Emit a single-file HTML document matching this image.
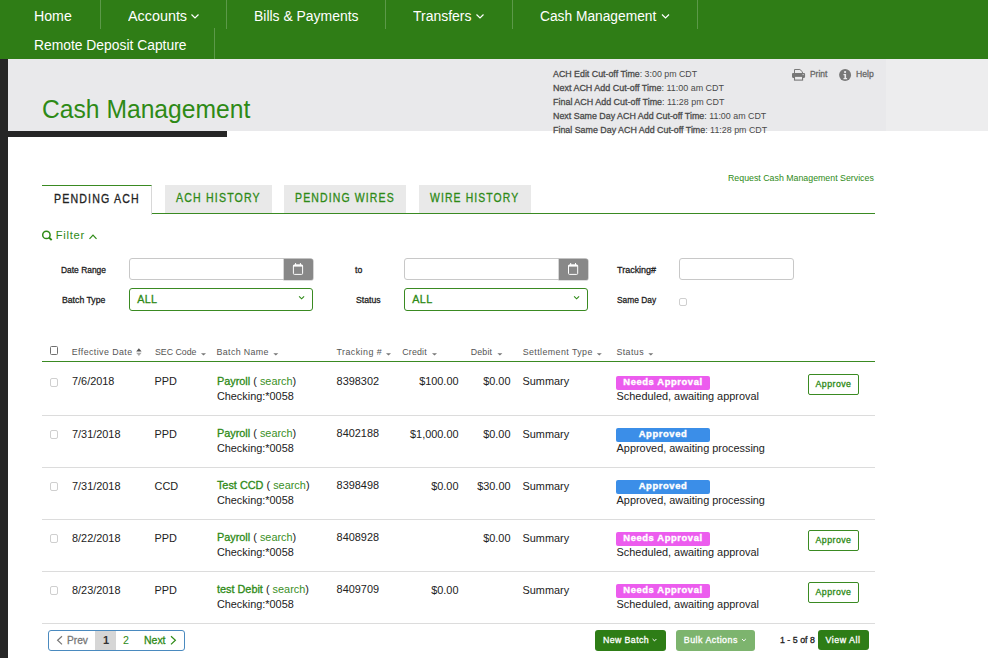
<!DOCTYPE html>
<html><head><meta charset="utf-8">
<style>
*{box-sizing:border-box;margin:0;padding:0}
html,body{width:988px;height:658px;overflow:hidden;background:#fff;font-family:"Liberation Sans",sans-serif;position:relative}
.t{position:absolute;white-space:nowrap}
.t b{font-weight:normal;-webkit-text-stroke:0.3px currentColor}
.bx{position:absolute}
.sep{position:absolute;width:1px;background:rgba(255,255,255,0.22)}
.cb{position:absolute;width:8.5px;height:9px;border:1px solid #cfcfcf;border-radius:2px;background:#fff}
.rsep{position:absolute;left:42px;width:833px;height:1px;background:#dcdcdc}
.badge{position:absolute;left:616px;width:94px;height:13.5px;border-radius:2px;color:#fff;font-weight:bold;font-size:9.4px;line-height:11.5px;-webkit-text-stroke:0.4px #fff;text-align:center;letter-spacing:0.6px;padding-top:0px;white-space:nowrap}
.appr{position:absolute;left:808px;width:51px;height:20.6px;border:1px solid #3a8a22;border-radius:2px;color:#2e8a16;font-weight:normal;-webkit-text-stroke:0.3px #2e8a16;font-size:8.8px;line-height:18.6px;text-align:center;white-space:nowrap;letter-spacing:0.45px}
.inp{position:absolute;border:1px solid #c8c8c8;border-radius:3px;background:#fff}
.cal{position:absolute;background:#888;border-radius:0 2px 2px 0;box-shadow:0 0 0 0.6px #bbb}
.sel{position:absolute;border:1.4px solid #3a8a22;border-radius:3px;background:#fff}
.tab{position:absolute;top:185px;height:28px;background:#e9e9e9}
svg{position:absolute;overflow:visible}
</style></head><body>
<div class="bx" style="left:0;top:0;width:988px;height:59px;background:#2f7d16"></div>
<div class="sep" style="left:100px;top:0;height:29px"></div>
<div class="sep" style="left:226px;top:0;height:29px"></div>
<div class="sep" style="left:385px;top:0;height:29px"></div>
<div class="sep" style="left:512px;top:0;height:29px"></div>
<div class="sep" style="left:697px;top:0;height:29px"></div>
<div class="sep" style="left:214px;top:28px;height:30.5px"></div>
<svg style="left:0;top:0" width="988" height="59"><g fill="none" stroke="#fff" stroke-width="1.2">
<polyline points="191.5,14.5 195,18 198.5,14.5"/>
<polyline points="476.5,14.5 480,18 483.5,14.5"/>
<polyline points="662,14.5 665.5,18 669,14.5"/>
</g></svg>
<div class="bx" style="left:0;top:59px;width:8px;height:600px;background:#262626"></div>
<div class="bx" style="left:8px;top:59px;width:878px;height:71.5px;background:#e9e9eb"></div>
<div class="bx" style="left:886px;top:59px;width:102px;height:71.5px;background:#ededee"></div>
<div class="bx" style="left:8px;top:131px;width:219px;height:6px;background:#262626"></div>
<!-- print icon -->
<svg style="left:791.9px;top:69px" width="13.1" height="11.6" viewBox="0 0 13.1 11.6">
<path d="M2.5 4.2V0.5H7.9L10.4 2.8V4.2" fill="#e9e9eb" stroke="#777" stroke-width="1"/>
<rect x="0" y="3.9" width="13.1" height="5" rx="1.1" fill="#777"/>
<circle cx="11.1" cy="5.6" r="0.6" fill="#e9e9eb"/>
<rect x="2.5" y="7.3" width="8.1" height="3.8" fill="#e9e9eb" stroke="#777" stroke-width="1.1"/>
</svg>
<!-- help icon -->
<svg style="left:839.3px;top:68.9px" width="12.2" height="12" viewBox="0 0 12 12">
<circle cx="6" cy="6" r="6" fill="#777"/>
<circle cx="6" cy="3.1" r="1.1" fill="#e9e9eb"/>
<path fill="#e9e9eb" d="M4.4 5h2.6v4h1v1.2h-3.6v-1.2h1v-2.8h-1z"/>
</svg>
<!-- tabs -->
<div class="bx" style="left:42px;top:185px;width:110px;height:29.5px;background:#fff;border-top:1px solid #3a8a22;border-right:1px solid #d8d8d8"></div>
<div class="tab" style="left:165px;width:107px"></div>
<div class="tab" style="left:284px;width:122px"></div>
<div class="tab" style="left:419px;width:112px"></div>
<div class="bx" style="left:152px;top:213px;width:723px;height:1px;background:#3a8a22"></div>
<!-- filter icons -->
<svg style="left:0;top:0" width="988" height="658"><g fill="none" stroke="#2e8a16">
<circle cx="46.4" cy="234.9" r="3.7" stroke-width="1.5"/>
<line x1="49" y1="237.5" x2="51.7" y2="240.2" stroke-width="1.9"/>
<polyline points="89.5,238.8 93,235.2 96.5,238.8" stroke-width="1.2"/>
</g></svg>
<!-- form -->
<div class="inp" style="left:129.3px;top:258.4px;width:183.6px;height:22px"></div>
<div class="cal" style="left:283.6px;top:258.6px;width:29.3px;height:21.6px"></div>
<div class="inp" style="left:404.4px;top:258.4px;width:183.5px;height:22px"></div>
<div class="cal" style="left:558.6px;top:258.6px;width:29.3px;height:21.6px"></div>
<svg style="left:0;top:0" width="988" height="658"><g fill="none" stroke="#fff" stroke-width="1">
<rect x="293.4" y="264.8" width="9.2" height="9.6" rx="1"/>
<rect x="293.4" y="265" width="9.2" height="1.6" fill="#fff" stroke="none"/>
<line x1="295.6" y1="263" x2="295.6" y2="265.5"/>
<line x1="300.4" y1="263" x2="300.4" y2="265.5"/>
<rect x="568.5" y="264.8" width="9.2" height="9.6" rx="1"/>
<rect x="568.5" y="265" width="9.2" height="1.6" fill="#fff" stroke="none"/>
<line x1="570.7" y1="263" x2="570.7" y2="265.5"/>
<line x1="575.5" y1="263" x2="575.5" y2="265.5"/>
</g></svg>
<div class="sel" style="left:129.3px;top:288.4px;width:183.6px;height:22.2px"></div>
<div class="sel" style="left:404.4px;top:288.4px;width:183.5px;height:22.2px"></div>
<svg style="left:0;top:0" width="988" height="658"><g fill="none" stroke="#2e8a16" stroke-width="1.1">
<polyline points="299.1,296.3 301.6,298.8 304.1,296.3"/>
<polyline points="574.1,296.3 576.6,298.8 579.1,296.3"/>
</g></svg>
<div class="inp" style="left:679.2px;top:258.3px;width:114.6px;height:22.2px"></div>
<div class="cb" style="left:679px;top:298px;width:8px;height:8px"></div>
<!-- table header -->
<div class="bx" style="left:50.3px;top:346.3px;width:7.6px;height:8.5px;border:1px solid #707070;border-radius:1.5px"></div>
<svg style="left:0;top:0" width="988" height="658"><g fill="#777">
<path d="M136.2 351.5l2.7-3.3 2.7 3.3z" fill="#555"/>
<path d="M136.2 352.8l2.7 3.3 2.7-3.3z" fill="#aaa"/>
<path d="M201 353.2h5l-2.5 2.3z"/>
<path d="M273.3 353.2h5l-2.5 2.3z"/>
<path d="M386 353.2h5l-2.5 2.3z"/>
<path d="M432 353.2h5l-2.5 2.3z"/>
<path d="M497.4 353.2h5l-2.5 2.3z"/>
<path d="M596.8 353.2h5l-2.5 2.3z"/>
<path d="M648.3 353.2h5l-2.5 2.3z"/>
</g></svg>
<div class="bx" style="left:42px;top:360.5px;width:833px;height:1.3px;background:#3a8a22"></div>
<!-- pagination -->
<div class="bx" style="left:48.3px;top:630.4px;width:136.3px;height:20.6px;border:1px solid #4a8abf;border-radius:3px"></div>
<div class="bx" style="left:95.2px;top:631.2px;width:20.6px;height:18.6px;background:#d6d6d6"></div>
<svg style="left:0;top:0" width="988" height="658"><g fill="none" stroke-width="1.2">
<polyline points="62,636.2 57.6,640.3 62,644.4" stroke="#777"/>
<polyline points="171,636.2 175.4,640.3 171,644.4" stroke="#2e8a16"/>
</g></svg>
<div class="bx" style="left:595.2px;top:630px;width:70.5px;height:20.7px;background:#2e7d16;border-radius:3px"></div>
<div class="bx" style="left:676px;top:630px;width:79px;height:20.7px;background:#7db46e;border-radius:3px"></div>
<div class="bx" style="left:818px;top:630.1px;width:50.7px;height:20.4px;background:#2e7d16;border-radius:3px"></div>
<svg style="left:0;top:0" width="988" height="658"><g fill="none" stroke="#fff" stroke-width="1">
<polyline points="652.6,639 654.5,640.9 656.4,639"/>
<polyline points="742,639 743.9,640.9 745.8,639"/>
</g></svg>
<div class="t" style="left:34.43px;top:9px;font-size:14.68px;line-height:14.68px;font-weight:normal;color:#fff;letter-spacing:0px;transform:scaleX(0.9658);transform-origin:0 0;">Home</div>
<div class="t" style="left:127.8px;top:9px;font-size:14.68px;line-height:14.68px;font-weight:normal;color:#fff;letter-spacing:0px;transform:scaleX(0.9783);transform-origin:0 0;">Accounts</div>
<div class="t" style="left:253.55px;top:9px;font-size:14.68px;line-height:14.68px;font-weight:normal;color:#fff;letter-spacing:0px;transform:scaleX(0.9495);transform-origin:0 0;">Bills &amp; Payments</div>
<div class="t" style="left:413.4px;top:9px;font-size:14.68px;line-height:14.68px;font-weight:normal;color:#fff;letter-spacing:0px;transform:scaleX(0.9525);transform-origin:0 0;">Transfers</div>
<div class="t" style="left:540.0px;top:9px;font-size:14.68px;line-height:14.68px;font-weight:normal;color:#fff;letter-spacing:0px;transform:scaleX(0.9379);transform-origin:0 0;">Cash Management</div>
<div class="t" style="left:34.46px;top:38px;font-size:14.68px;line-height:14.68px;font-weight:normal;color:#fff;letter-spacing:0px;transform:scaleX(0.9444);transform-origin:0 0;">Remote Deposit Capture</div>
<div class="t" style="left:42.17px;top:96px;font-size:26.45px;line-height:26.45px;font-weight:normal;color:#2e8a16;letter-spacing:0px;transform:scaleX(0.9323);transform-origin:0 0;">Cash Management</div>
<div class="t" style="left:553.0px;top:70px;font-size:9.3px;line-height:9.3px;font-weight:normal;color:#4a4a4a;letter-spacing:0px;transform:scaleX(0.95);transform-origin:0 0;"><b>ACH Edit Cut-off Time</b>: 3:00 pm CDT</div>
<div class="t" style="left:553.0px;top:84px;font-size:9.3px;line-height:9.3px;font-weight:normal;color:#4a4a4a;letter-spacing:0px;transform:scaleX(0.964);transform-origin:0 0;"><b>Next ACH Add Cut-off Time</b>: 11:00 am CDT</div>
<div class="t" style="left:553.0px;top:98px;font-size:9.3px;line-height:9.3px;font-weight:normal;color:#4a4a4a;letter-spacing:0px;transform:scaleX(0.9609);transform-origin:0 0;"><b>Final ACH Add Cut-off Time</b>: 11:28 pm CDT</div>
<div class="t" style="left:553.0px;top:112px;font-size:9.3px;line-height:9.3px;font-weight:normal;color:#4a4a4a;letter-spacing:0px;transform:scaleX(0.9545);transform-origin:0 0;"><b>Next Same Day ACH Add Cut-off Time</b>: 11:00 am CDT</div>
<div class="t" style="left:553.0px;top:126px;font-size:9.3px;line-height:9.3px;font-weight:normal;color:#4a4a4a;letter-spacing:0px;transform:scaleX(0.9542);transform-origin:0 0;"><b>Final Same Day ACH Add Cut-off Time</b>: 11:28 pm CDT</div>
<div class="t" style="left:809.8px;top:70px;font-size:9.3px;line-height:9.3px;font-weight:normal;-webkit-text-stroke:0.3px currentColor;color:#666;letter-spacing:0px;transform:scaleX(0.905);transform-origin:0 0;">Print</div>
<div class="t" style="left:856.4px;top:70px;font-size:9.3px;line-height:9.3px;font-weight:normal;-webkit-text-stroke:0.3px currentColor;color:#666;letter-spacing:0px;transform:scaleX(0.9263);transform-origin:0 0;">Help</div>
<div class="t" style="left:727.7px;top:173px;font-size:9.59px;line-height:9.59px;font-weight:normal;color:#2e8a16;letter-spacing:0px;transform:scaleX(0.9189);transform-origin:0 0;">Request Cash Management Services</div>
<div class="t" style="left:53.7px;top:193px;font-size:12.06px;line-height:12.06px;font-weight:normal;-webkit-text-stroke:0.3px currentColor;color:#222;letter-spacing:1.3px;transform:scaleX(0.8813);transform-origin:0 0;">PENDING ACH</div>
<div class="t" style="left:175.8px;top:192px;font-size:12.06px;line-height:12.06px;font-weight:normal;-webkit-text-stroke:0.3px currentColor;color:#2e8a16;letter-spacing:1.3px;transform:scaleX(0.8821);transform-origin:0 0;">ACH HISTORY</div>
<div class="t" style="left:295.4px;top:192px;font-size:12.06px;line-height:12.06px;font-weight:normal;-webkit-text-stroke:0.3px currentColor;color:#2e8a16;letter-spacing:1.3px;transform:scaleX(0.8708);transform-origin:0 0;">PENDING WIRES</div>
<div class="t" style="left:430.0px;top:192px;font-size:12.06px;line-height:12.06px;font-weight:normal;-webkit-text-stroke:0.3px currentColor;color:#2e8a16;letter-spacing:1.3px;transform:scaleX(0.8627);transform-origin:0 0;">WIRE HISTORY</div>
<div class="t" style="left:55.7px;top:230px;font-size:11.19px;line-height:11.19px;font-weight:normal;color:#2e8a16;letter-spacing:0.74px;">Filter</div>
<div class="t" style="left:61.0px;top:266px;font-size:9.3px;line-height:9.3px;font-weight:normal;-webkit-text-stroke:0.3px currentColor;color:#222;letter-spacing:0px;transform:scaleX(0.906);transform-origin:0 0;">Date Range</div>
<div class="t" style="left:62.4px;top:296px;font-size:9.3px;line-height:9.3px;font-weight:normal;-webkit-text-stroke:0.3px currentColor;color:#222;letter-spacing:0px;transform:scaleX(0.934);transform-origin:0 0;">Batch Type</div>
<div class="t" style="left:354.8px;top:266px;font-size:9.3px;line-height:9.3px;font-weight:normal;-webkit-text-stroke:0.3px currentColor;color:#222;letter-spacing:0px;transform:scaleX(0.9375);transform-origin:0 0;">to</div>
<div class="t" style="left:356.2px;top:296px;font-size:9.3px;line-height:9.3px;font-weight:normal;-webkit-text-stroke:0.3px currentColor;color:#222;letter-spacing:0px;transform:scaleX(0.937);transform-origin:0 0;">Status</div>
<div class="t" style="left:617.1px;top:266px;font-size:9.3px;line-height:9.3px;font-weight:normal;-webkit-text-stroke:0.3px currentColor;color:#222;letter-spacing:0px;transform:scaleX(0.9659);transform-origin:0 0;">Tracking#</div>
<div class="t" style="left:617.1px;top:296px;font-size:9.3px;line-height:9.3px;font-weight:normal;-webkit-text-stroke:0.3px currentColor;color:#222;letter-spacing:0px;transform:scaleX(0.9);transform-origin:0 0;">Same Day</div>
<div class="t" style="left:137.2px;top:294px;font-size:10.76px;line-height:10.76px;font-weight:normal;-webkit-text-stroke:0.3px currentColor;color:#2e8a16;letter-spacing:0.35px;">ALL</div>
<div class="t" style="left:412.3px;top:294px;font-size:10.76px;line-height:10.76px;font-weight:normal;-webkit-text-stroke:0.3px currentColor;color:#2e8a16;letter-spacing:0.35px;">ALL</div>
<div class="t" style="left:71.8px;top:348px;font-size:8.87px;line-height:8.87px;font-weight:normal;color:#555;letter-spacing:0.408px;">Effective Date</div>
<div class="t" style="left:154.7px;top:348px;font-size:8.87px;line-height:8.87px;font-weight:normal;color:#555;letter-spacing:0px;transform:scaleX(0.9905);transform-origin:0 0;">SEC Code</div>
<div class="t" style="left:216.6px;top:348px;font-size:8.87px;line-height:8.87px;font-weight:normal;color:#555;letter-spacing:0.344px;">Batch Name</div>
<div class="t" style="left:336.4px;top:348px;font-size:8.87px;line-height:8.87px;font-weight:normal;color:#555;letter-spacing:0.478px;">Tracking #</div>
<div class="t" style="left:402.3px;top:348px;font-size:8.87px;line-height:8.87px;font-weight:normal;color:#555;letter-spacing:0.14px;">Credit</div>
<div class="t" style="left:470.7px;top:348px;font-size:8.87px;line-height:8.87px;font-weight:normal;color:#555;letter-spacing:0.15px;">Debit</div>
<div class="t" style="left:522.7px;top:348px;font-size:8.87px;line-height:8.87px;font-weight:normal;color:#555;letter-spacing:0.414px;">Settlement Type</div>
<div class="t" style="left:616.4px;top:348px;font-size:8.87px;line-height:8.87px;font-weight:normal;color:#555;letter-spacing:0.42px;">Status</div>
<div class="t" style="left:66.8px;top:635px;font-size:11.05px;line-height:11.05px;font-weight:normal;-webkit-text-stroke:0.3px currentColor;color:#777;letter-spacing:0px;transform:scaleX(0.9217);transform-origin:0 0;">Prev</div>
<div class="t" style="left:103.0px;top:635px;font-size:11.05px;line-height:11.05px;font-weight:bold;color:#333;letter-spacing:-1.6px;">1</div>
<div class="t" style="left:123.2px;top:635px;font-size:11.05px;line-height:11.05px;font-weight:normal;color:#2e8a16;letter-spacing:0px;transform:scaleX(0.9667);transform-origin:0 0;">2</div>
<div class="t" style="left:144.1px;top:635px;font-size:11.05px;line-height:11.05px;font-weight:normal;-webkit-text-stroke:0.3px currentColor;color:#2e8a16;letter-spacing:0px;transform:scaleX(0.9478);transform-origin:0 0;">Next</div>
<div class="t" style="left:602.9px;top:636px;font-size:8.87px;line-height:8.87px;font-weight:normal;-webkit-text-stroke:0.3px currentColor;color:#fff;letter-spacing:0.4px;transform:scaleX(0.9913);transform-origin:0 0;">New Batch</div>
<div class="t" style="left:683.8px;top:636px;font-size:8.87px;line-height:8.87px;font-weight:normal;-webkit-text-stroke:0.3px currentColor;color:#fff;letter-spacing:0.482px;">Bulk Actions</div>
<div class="t" style="left:780.0px;top:636px;font-size:8.87px;line-height:8.87px;font-weight:normal;-webkit-text-stroke:0.3px currentColor;color:#222;letter-spacing:0px;transform:scaleX(0.9971);transform-origin:0 0;">1 - 5 of 8</div>
<div class="t" style="left:825.6px;top:636px;font-size:8.87px;line-height:8.87px;font-weight:normal;-webkit-text-stroke:0.3px currentColor;color:#fff;letter-spacing:0.486px;">View All</div>
<div class="cb" style="left:49.5px;top:378px"></div>
<div class="t" style="left:72px;top:376px;font-size:10.9px;line-height:10.9px;color:#222;letter-spacing:0px">7/6/2018</div>
<div class="t" style="left:154.6px;top:376px;font-size:10.9px;line-height:10.9px;color:#222;letter-spacing:0px">PPD</div>
<div class="t" style="left:216.9px;top:376px;font-size:10.9px;line-height:10.9px;color:#222;letter-spacing:0px"><b style="color:#2e8a16">Payroll</b> ( <span style="color:#3a8f26">search</span>)</div>
<div class="t" style="left:216.9px;top:391px;font-size:10.9px;line-height:10.9px;color:#222;letter-spacing:0px">Checking:*0058</div>
<div class="t" style="left:336.6px;top:376px;font-size:10.9px;line-height:10.9px;color:#222;letter-spacing:0px">8398302</div>
<div class="t" style="right:529.5px;top:376px;font-size:10.9px;line-height:10.9px;color:#222;letter-spacing:0px">$100.00</div>
<div class="t" style="right:477.5px;top:376px;font-size:10.9px;line-height:10.9px;color:#222;letter-spacing:0px">$0.00</div>
<div class="t" style="left:522.5px;top:376px;font-size:10.9px;line-height:10.9px;color:#222;letter-spacing:0px">Summary</div>
<div class="badge" style="top:376px;background:#ec5cee">Needs Approval</div>
<div class="t" style="left:616.6px;top:391px;font-size:10.9px;line-height:10.9px;color:#222;letter-spacing:0px">Scheduled, awaiting approval</div>
<div class="appr" style="top:374px">Approve</div>
<div class="rsep" style="top:415px"></div>
<div class="cb" style="left:49.5px;top:430px"></div>
<div class="t" style="left:72px;top:429px;font-size:10.9px;line-height:10.9px;color:#222;letter-spacing:0px">7/31/2018</div>
<div class="t" style="left:154.6px;top:429px;font-size:10.9px;line-height:10.9px;color:#222;letter-spacing:0px">PPD</div>
<div class="t" style="left:216.9px;top:428px;font-size:10.9px;line-height:10.9px;color:#222;letter-spacing:0px"><b style="color:#2e8a16">Payroll</b> ( <span style="color:#3a8f26">search</span>)</div>
<div class="t" style="left:216.9px;top:443px;font-size:10.9px;line-height:10.9px;color:#222;letter-spacing:0px">Checking:*0058</div>
<div class="t" style="left:336.6px;top:428px;font-size:10.9px;line-height:10.9px;color:#222;letter-spacing:0px">8402188</div>
<div class="t" style="right:529.5px;top:429px;font-size:10.9px;line-height:10.9px;color:#222;letter-spacing:0px">$1,000.00</div>
<div class="t" style="right:477.5px;top:429px;font-size:10.9px;line-height:10.9px;color:#222;letter-spacing:0px">$0.00</div>
<div class="t" style="left:522.5px;top:429px;font-size:10.9px;line-height:10.9px;color:#222;letter-spacing:0px">Summary</div>
<div class="badge" style="top:428px;background:#3b8ee8">Approved</div>
<div class="t" style="left:616.6px;top:443px;font-size:10.9px;line-height:10.9px;color:#222;letter-spacing:0px">Approved, awaiting processing</div>
<div class="rsep" style="top:467px"></div>
<div class="cb" style="left:49.5px;top:482px"></div>
<div class="t" style="left:72px;top:481px;font-size:10.9px;line-height:10.9px;color:#222;letter-spacing:0px">7/31/2018</div>
<div class="t" style="left:154.6px;top:481px;font-size:10.9px;line-height:10.9px;color:#222;letter-spacing:0px">CCD</div>
<div class="t" style="left:216.9px;top:480px;font-size:10.9px;line-height:10.9px;color:#222;letter-spacing:0px"><b style="color:#2e8a16">Test CCD</b> ( <span style="color:#3a8f26">search</span>)</div>
<div class="t" style="left:216.9px;top:495px;font-size:10.9px;line-height:10.9px;color:#222;letter-spacing:0px">Checking:*0058</div>
<div class="t" style="left:336.6px;top:480px;font-size:10.9px;line-height:10.9px;color:#222;letter-spacing:0px">8398498</div>
<div class="t" style="right:529.5px;top:481px;font-size:10.9px;line-height:10.9px;color:#222;letter-spacing:0px">$0.00</div>
<div class="t" style="right:477.5px;top:481px;font-size:10.9px;line-height:10.9px;color:#222;letter-spacing:0px">$30.00</div>
<div class="t" style="left:522.5px;top:481px;font-size:10.9px;line-height:10.9px;color:#222;letter-spacing:0px">Summary</div>
<div class="badge" style="top:480px;background:#3b8ee8">Approved</div>
<div class="t" style="left:616.6px;top:495px;font-size:10.9px;line-height:10.9px;color:#222;letter-spacing:0px">Approved, awaiting processing</div>
<div class="rsep" style="top:519px"></div>
<div class="cb" style="left:49.5px;top:534px"></div>
<div class="t" style="left:72px;top:533px;font-size:10.9px;line-height:10.9px;color:#222;letter-spacing:0px">8/22/2018</div>
<div class="t" style="left:154.6px;top:533px;font-size:10.9px;line-height:10.9px;color:#222;letter-spacing:0px">PPD</div>
<div class="t" style="left:216.9px;top:532px;font-size:10.9px;line-height:10.9px;color:#222;letter-spacing:0px"><b style="color:#2e8a16">Payroll</b> ( <span style="color:#3a8f26">search</span>)</div>
<div class="t" style="left:216.9px;top:547px;font-size:10.9px;line-height:10.9px;color:#222;letter-spacing:0px">Checking:*0058</div>
<div class="t" style="left:336.6px;top:532px;font-size:10.9px;line-height:10.9px;color:#222;letter-spacing:0px">8408928</div>
<div class="t" style="right:477.5px;top:533px;font-size:10.9px;line-height:10.9px;color:#222;letter-spacing:0px">$0.00</div>
<div class="t" style="left:522.5px;top:533px;font-size:10.9px;line-height:10.9px;color:#222;letter-spacing:0px">Summary</div>
<div class="badge" style="top:532px;background:#ec5cee">Needs Approval</div>
<div class="t" style="left:616.6px;top:547px;font-size:10.9px;line-height:10.9px;color:#222;letter-spacing:0px">Scheduled, awaiting approval</div>
<div class="appr" style="top:530px">Approve</div>
<div class="rsep" style="top:571px"></div>
<div class="cb" style="left:49.5px;top:586px"></div>
<div class="t" style="left:72px;top:585px;font-size:10.9px;line-height:10.9px;color:#222;letter-spacing:0px">8/23/2018</div>
<div class="t" style="left:154.6px;top:585px;font-size:10.9px;line-height:10.9px;color:#222;letter-spacing:0px">PPD</div>
<div class="t" style="left:216.9px;top:584px;font-size:10.9px;line-height:10.9px;color:#222;letter-spacing:0px"><b style="color:#2e8a16">test Debit</b> ( <span style="color:#3a8f26">search</span>)</div>
<div class="t" style="left:216.9px;top:599px;font-size:10.9px;line-height:10.9px;color:#222;letter-spacing:0px">Checking:*0058</div>
<div class="t" style="left:336.6px;top:584px;font-size:10.9px;line-height:10.9px;color:#222;letter-spacing:0px">8409709</div>
<div class="t" style="right:529.5px;top:585px;font-size:10.9px;line-height:10.9px;color:#222;letter-spacing:0px">$0.00</div>
<div class="t" style="left:522.5px;top:585px;font-size:10.9px;line-height:10.9px;color:#222;letter-spacing:0px">Summary</div>
<div class="badge" style="top:584px;background:#ec5cee">Needs Approval</div>
<div class="t" style="left:616.6px;top:599px;font-size:10.9px;line-height:10.9px;color:#222;letter-spacing:0px">Scheduled, awaiting approval</div>
<div class="appr" style="top:582px">Approve</div>
<div class="rsep" style="top:623px"></div>
</body></html>
